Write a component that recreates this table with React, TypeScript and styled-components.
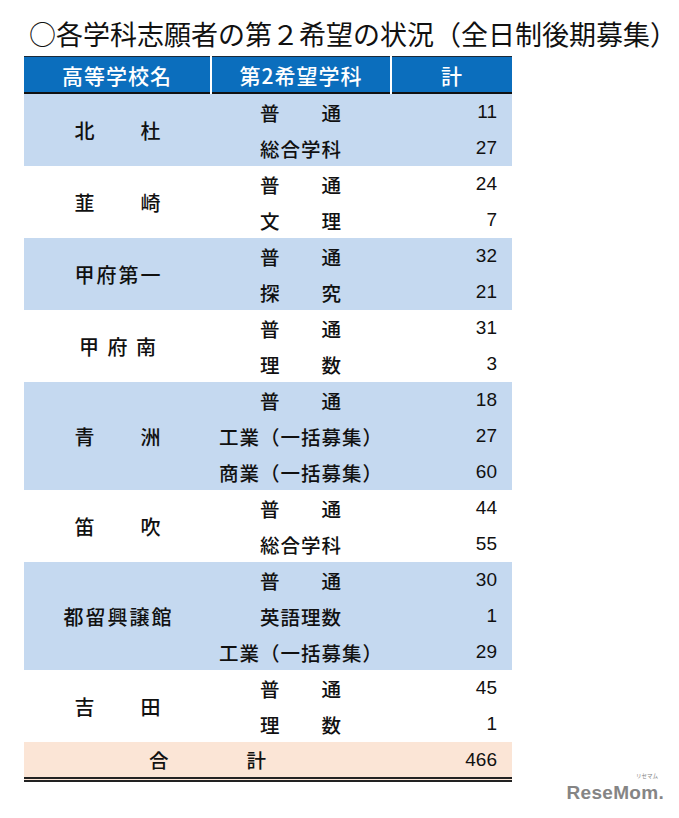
import React from 'react'
import styled, { createGlobalStyle } from 'styled-components'

const GlobalStyle = createGlobalStyle`
  body {
    margin: 0;
    background: #ffffff;
    font-family: "Noto Sans CJK JP", "Noto Sans", sans-serif;
    color: #111111;
  }
`

type Course = { name: string; count: number }
type School = { name: string; courses: Course[] }

const schools: School[] = [
  { name: '北　　杜', courses: [{ name: '普　　通', count: 11 }, { name: '総合学科', count: 27 }] },
  { name: '韮　　崎', courses: [{ name: '普　　通', count: 24 }, { name: '文　　理', count: 7 }] },
  { name: '甲府第一', courses: [{ name: '普　　通', count: 32 }, { name: '探　　究', count: 21 }] },
  { name: '甲 府 南', courses: [{ name: '普　　通', count: 31 }, { name: '理　　数', count: 3 }] },
  {
    name: '青　　洲',
    courses: [
      { name: '普　　通', count: 18 },
      { name: '工業（一括募集）', count: 27 },
      { name: '商業（一括募集）', count: 60 },
    ],
  },
  { name: '笛　　吹', courses: [{ name: '普　　通', count: 44 }, { name: '総合学科', count: 55 }] },
  {
    name: '都留興譲館',
    courses: [
      { name: '普　　通', count: 30 },
      { name: '英語理数', count: 1 },
      { name: '工業（一括募集）', count: 29 },
    ],
  },
  { name: '吉　　田', courses: [{ name: '普　　通', count: 45 }, { name: '理　　数', count: 1 }] },
]

const total = schools.reduce((sum, s) => sum + s.courses.reduce((a, c) => a + c.count, 0), 0)

const Page = styled.div`
  width: 679px;
  height: 818px;
  padding-left: 24px;
  box-sizing: border-box;
  overflow: hidden;
`

const Title = styled.h1`
  margin: 0;
  padding: 17px 0 0 5px;
  height: 56px;
  box-sizing: border-box;
  font-size: 27px;
  font-weight: 400;
  line-height: 34px;
  white-space: nowrap;
  color: #111111;
`

const Body = styled.div`
  display: flex;
  align-items: flex-end;
`

const Table = styled.table`
  width: 488px;
  flex: none;
  border-collapse: collapse;
  border-spacing: 0;
  table-layout: fixed;
  border-bottom: 5px double #222222;
`

const HeadRow = styled.tr`
  background: #0b6ebd;
  border-top: 1px solid #1b2a3a;
  border-bottom: 2px solid #111111;
`

const HeadCell = styled.th<{ $w: number; $last?: boolean }>`
  width: ${(p) => p.$w}px;
  height: 35px;
  padding: 0;
  color: #ffffff;
  font-size: 21px;
  font-weight: 500;
  letter-spacing: 1px;
  text-align: center;
  border-right: ${(p) => (p.$last ? 'none' : '2px solid #ffffff')};
`

const Row = styled.tr<{ $shade: boolean }>`
  background: ${(p) => (p.$shade ? '#c5d9f0' : '#ffffff')};
`

const SchoolCell = styled.td`
  padding: 0 0 0 2px;
  text-align: center;
  font-size: 20px;
  font-weight: 500;
  letter-spacing: 2px;
  white-space: nowrap;
`

const CourseCell = styled.td`
  height: 36px;
  padding: 0;
  text-align: center;
  font-size: 19.5px;
  font-weight: 500;
  letter-spacing: 1px;
  white-space: nowrap;
`

const CountCell = styled.td`
  padding: 0 15px 0 0;
  text-align: right;
  font-family: "Liberation Sans", Arial, sans-serif;
  font-size: 19px;
  color: #111111;
`

const TotalRow = styled.tr`
  background: #fbe5d6;
`

const TotalLabel = styled.td`
  height: 35px;
  padding: 0;
  text-align: center;
  font-size: 19.5px;
  font-weight: 500;
  white-space: nowrap;
`

const Logo = styled.div`
  position: relative;
  margin: 0 15px -22px auto;
  font-family: "Liberation Sans", Arial, sans-serif;
  font-size: 19px;
  font-weight: 700;
  letter-spacing: 0.3px;
  color: #858585;
`

const LogoKana = styled.span`
  position: absolute;
  right: 6px;
  top: -10px;
  line-height: 8px;
  font-family: "Noto Sans CJK JP", sans-serif;
  font-size: 5.5px;
  letter-spacing: 0;
  font-weight: 400;
`

const App = () => (
  <Page>
    <GlobalStyle />
    <Title>○各学科志願者の第２希望の状況（全日制後期募集）</Title>
    <Body>
      <Table>
        <thead>
          <HeadRow>
            <HeadCell $w={186}>高等学校名</HeadCell>
            <HeadCell $w={178}>第2希望学科</HeadCell>
            <HeadCell $w={120} $last>
              計
            </HeadCell>
          </HeadRow>
        </thead>
        <tbody>
          {schools.map((school, i) =>
            school.courses.map((course, j) => (
              <Row key={`${i}-${j}`} $shade={i % 2 === 0}>
                {j === 0 && <SchoolCell rowSpan={school.courses.length}>{school.name}</SchoolCell>}
                <CourseCell>{course.name}</CourseCell>
                <CountCell>{course.count}</CountCell>
              </Row>
            ))
          )}
          <TotalRow>
            <TotalLabel colSpan={2}>合　　　　計</TotalLabel>
            <CountCell>{total}</CountCell>
          </TotalRow>
        </tbody>
      </Table>
      <Logo>
        ReseMom.
        <LogoKana>リセマム</LogoKana>
      </Logo>
    </Body>
  </Page>
)

export default App
